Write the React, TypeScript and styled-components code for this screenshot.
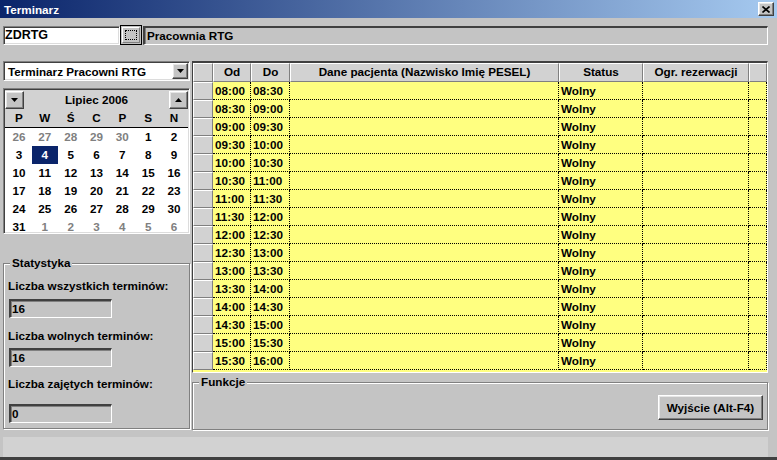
import React from 'react';
import styled, { createGlobalStyle, css } from 'styled-components';

const BG = '#c4c4c4';
const TEX = '#d2d2d2';
const YELLOW = '#ffff80';

const GlobalStyle = createGlobalStyle`
  html, body { margin: 0; padding: 0; background: ${BG}; }
  body {
    font-family: "Liberation Sans", Arial, sans-serif;
    font-size: 11.7px;
    font-weight: bold;
    color: #000;
  }
  * { box-sizing: border-box; }
`;

const sunken = css`
  border-style: solid;
  border-width: 1px;
  border-color: #808080 #ffffff #ffffff #808080;
  box-shadow: inset 1px 1px 0 #404040, inset -1px -1px 0 #dcdcdc;
`;

const raised = css`
  border-style: solid;
  border-width: 1px;
  border-color: #ffffff #404040 #404040 #ffffff;
  box-shadow: inset -1px -1px 0 #808080, inset 1px 1px 0 #e6e6e6;
`;

const etched = css`
  border: 1px solid #808080;
  box-shadow: inset 1px 1px 0 #ffffff, 1px 1px 0 #ffffff;
`;

const Window = styled.div`
  width: 777px;
  height: 460px;
  display: flex;
  flex-direction: column;
  background: ${BG};
  overflow: hidden;
  border-bottom: 3px solid #404040;
`;

const TitleBar = styled.div`
  height: 18px;
  flex: none;
  display: flex;
  align-items: center;
  justify-content: space-between;
  padding: 0 3px 0 4px;
  background: linear-gradient(to right, #0a246a 0%, #a6caf0 100%);
  color: #fff;
`;

const CloseButton = styled.div`
  width: 16px;
  height: 14px;
  ${raised};
  background: ${BG};
  display: flex;
  align-items: center;
  justify-content: center;
`;

const Body = styled.div`
  flex: 1;
  display: flex;
  flex-direction: column;
  padding: 7px 9px 0 3px;
`;

const TopRow = styled.div`
  height: 20px;
  display: flex;
  align-items: center;
`;

const CodeField = styled.div`
  width: 117px;
  height: 19px;
  ${sunken};
  background: #fff;
  padding-left: 1px;
  line-height: 17px;
  font-size: 12.5px;
`;

const BrowseButton = styled.div`
  width: 22px;
  height: 20px;
  border: 1px solid #000;
  background: ${BG};
  display: flex;
  padding: 1px;
`;

const BrowseInner = styled.div`
  flex: 1;
  border-style: solid;
  border-width: 1px;
  border-color: #fff #808080 #808080 #fff;
  display: flex;
  padding: 2px;
`;

const FocusRect = styled.div`
  flex: 1;
  border: 1px dotted #000;
`;

const NameField = styled.div`
  flex: 1;
  height: 19px;
  margin-left: 1px;
  background: ${BG};
  border-style: solid;
  border-width: 2px 1px 1px 2px;
  border-color: #404040 #ffffff #ffffff #404040;
  box-shadow: inset 1px 0 0 #808080;
  padding-left: 2px;
  line-height: 15px;
`;

const Main = styled.div`
  margin-top: 16px;
  height: 369px;
  display: flex;
  gap: 2px;
`;

const LeftColumn = styled.div`
  width: 187px;
  display: flex;
  flex-direction: column;
`;

const Combo = styled.div`
  height: 20px;
  ${sunken};
  background: #fff;
  display: flex;
  align-items: center;
  padding: 0 1px 0 4px;
`;

const ComboText = styled.div`
  flex: 1;
`;

const SmallButton = styled.div<{ $w: number; $h: number }>`
  width: ${(p) => p.$w}px;
  height: ${(p) => p.$h}px;
  ${raised};
  background: ${BG};
  display: flex;
  align-items: center;
  justify-content: center;
  flex: none;
`;

const Calendar = styled.div`
  margin-top: 7px;
  height: 146px;
  ${sunken};
  background: #fff;
  overflow: hidden;
  display: flex;
  flex-direction: column;
  padding: 1px;
`;

const CalHeader = styled.div`
  height: 19px;
  flex: none;
  background: ${TEX};
  display: flex;
  align-items: center;
`;

const MonthLabel = styled.div`
  flex: 1;
  text-align: center;
`;

const WeekRow = styled.div`
  height: 19px;
  flex: none;
  display: grid;
  grid-template-columns: repeat(7, 1fr);
  background: ${TEX};
  border-bottom: 1px solid #000;
  padding: 0 1px;
`;

const WeekDay = styled.div`
  text-align: center;
  line-height: 18px;
`;

const DaysGrid = styled.div`
  display: grid;
  grid-template-columns: repeat(7, 1fr);
  grid-auto-rows: 18px;
  padding: 0 1px;
`;

const Day = styled.div<{ $muted?: boolean; $selected?: boolean }>`
  text-align: center;
  line-height: 18px;
  color: ${(p) => (p.$selected ? '#fff' : p.$muted ? '#808080' : '#000')};
  background: ${(p) => (p.$selected ? '#0a246a' : 'transparent')};
`;

const GroupBox = styled.div<{ $top: number; $h: number }>`
  position: relative;
  margin-top: ${(p) => p.$top}px;
  height: ${(p) => p.$h}px;
  ${etched};
  display: flex;
  flex-direction: column;
`;

const Legend = styled.div`
  position: absolute;
  top: -8px;
  left: 6px;
  padding: 0 2px;
  background: ${BG};
  line-height: 14px;
`;

const StatLabel = styled.div<{ $gap: number }>`
  margin: ${(p) => p.$gap}px 0 0 4px;
  height: 14px;
  line-height: 14px;
`;

const StatField = styled.div<{ $gap: number }>`
  margin: ${(p) => p.$gap}px 0 0 5px;
  width: 103px;
  height: 19px;
  background: ${BG};
  border-style: solid;
  border-width: 2px 1px 1px 2px;
  border-color: #404040 #ffffff #ffffff #404040;
  box-shadow: inset 1px 1px 0 #808080;
  padding-left: 1px;
  line-height: 16px;
`;

const RightColumn = styled.div`
  flex: 1;
  display: flex;
  flex-direction: column;
`;

const Grid = styled.div`
  height: 312px;
  flex: none;
  background: ${YELLOW};
  border-style: solid;
  border-width: 2px 1px 1px 1px;
  border-color: #404040 #ffffff #ffffff #404040;
  overflow: hidden;
`;

const COLS = '20px 38px 39px 269px 84px 106px 1fr';

const GridRow = styled.div<{ $h: number }>`
  display: grid;
  grid-template-columns: ${COLS};
  height: ${(p) => p.$h}px;
`;

const HeaderCell = styled.div`
  background: ${TEX};
  border-style: solid;
  border-width: 1px;
  border-color: #ffffff #808080 #808080 #ffffff;
  text-align: center;
  line-height: 16px;
  white-space: nowrap;
  overflow: hidden;
`;

const IndicatorCell = styled.div`
  background: ${TEX};
  border-style: solid;
  border-width: 1px;
  border-color: #ffffff #808080 #808080 #ffffff;
`;

const DataCell = styled.div`
  background: ${YELLOW};
  border-right: 1px dotted #000;
  border-bottom: 1px dotted #000;
  padding-left: 2px;
  line-height: 17px;
  white-space: nowrap;
`;

const FunctionsBody = styled.div`
  flex: 1;
  display: flex;
  justify-content: flex-end;
  align-items: flex-start;
  padding: 12px 4px 0 0;
`;

const ExitButton = styled.div`
  width: 105px;
  height: 25px;
  ${raised};
  background: ${BG};
  display: flex;
  align-items: center;
  justify-content: center;
`;

const StatusBar = styled.div`
  margin-top: 7px;
  height: 20px;
  flex: none;
  background: ${TEX};
`;

const TriDown = () => (
  <svg width="7" height="4" viewBox="0 0 7 4">
    <path d="M0 0H7L3.5 4Z" fill="#000" />
  </svg>
);
const TriUp = () => (
  <svg width="7" height="4" viewBox="0 0 7 4">
    <path d="M0 4H7L3.5 0Z" fill="#000" />
  </svg>
);
const CloseX = () => (
  <svg width="8" height="7" viewBox="0 0 8 7">
    <path d="M0.5 0.5L7.5 6.5M7.5 0.5L0.5 6.5" stroke="#000" strokeWidth="1.6" />
  </svg>
);

const weekDays = ['P', 'W', 'Ś', 'C', 'P', 'S', 'N'];

type DayInfo = { n: number; muted?: boolean; selected?: boolean };
const days: DayInfo[] = [
  ...[26, 27, 28, 29, 30].map((n) => ({ n, muted: true })),
  ...Array.from({ length: 31 }, (_, i) => ({ n: i + 1, selected: i + 1 === 4 })),
  ...[1, 2, 3, 4, 5, 6].map((n) => ({ n, muted: true })),
];

const pad = (n: number) => String(n).padStart(2, '0');
const slots = Array.from({ length: 16 }, (_, i) => {
  const s = 8 * 60 + i * 30;
  const e = s + 30;
  return {
    od: `${pad(Math.floor(s / 60))}:${pad(s % 60)}`,
    do: `${pad(Math.floor(e / 60))}:${pad(e % 60)}`,
  };
});

export default function App() {
  return (
    <>
      <GlobalStyle />
      <Window>
        <TitleBar>
          <span>Terminarz</span>
          <CloseButton>
            <CloseX />
          </CloseButton>
        </TitleBar>
        <Body>
          <TopRow>
            <CodeField>ZDRTG</CodeField>
            <BrowseButton>
              <BrowseInner>
                <FocusRect />
              </BrowseInner>
            </BrowseButton>
            <NameField>Pracownia RTG</NameField>
          </TopRow>
          <Main>
            <LeftColumn>
              <Combo>
                <ComboText>Terminarz Pracowni RTG</ComboText>
                <SmallButton $w={16} $h={16}>
                  <TriDown />
                </SmallButton>
              </Combo>
              <Calendar>
                <CalHeader>
                  <SmallButton $w={19} $h={18}>
                    <TriDown />
                  </SmallButton>
                  <MonthLabel>Lipiec 2006</MonthLabel>
                  <SmallButton $w={19} $h={18}>
                    <TriUp />
                  </SmallButton>
                </CalHeader>
                <WeekRow>
                  {weekDays.map((d, i) => (
                    <WeekDay key={i}>{d}</WeekDay>
                  ))}
                </WeekRow>
                <DaysGrid>
                  {days.map((d, i) => (
                    <Day key={i} $muted={d.muted} $selected={d.selected}>
                      {d.n}
                    </Day>
                  ))}
                </DaysGrid>
              </Calendar>
              <GroupBox $top={29} $h={166}>
                <Legend>Statystyka</Legend>
                <StatLabel $gap={15}>Liczba wszystkich terminów:</StatLabel>
                <StatField $gap={6}>16</StatField>
                <StatLabel $gap={11}>Liczba wolnych terminów:</StatLabel>
                <StatField $gap={5}>16</StatField>
                <StatLabel $gap={10}>Liczba zajętych terminów:</StatLabel>
                <StatField $gap={13}>0</StatField>
              </GroupBox>
            </LeftColumn>
            <RightColumn>
              <Grid>
                <GridRow $h={19}>
                  <HeaderCell />
                  <HeaderCell>Od</HeaderCell>
                  <HeaderCell>Do</HeaderCell>
                  <HeaderCell>Dane pacjenta (Nazwisko Imię PESEL)</HeaderCell>
                  <HeaderCell>Status</HeaderCell>
                  <HeaderCell>Ogr. rezerwacji</HeaderCell>
                  <HeaderCell />
                </GridRow>
                {slots.map((s) => (
                  <GridRow key={s.od} $h={18}>
                    <IndicatorCell />
                    <DataCell>{s.od}</DataCell>
                    <DataCell>{s.do}</DataCell>
                    <DataCell />
                    <DataCell>Wolny</DataCell>
                    <DataCell />
                    <DataCell />
                  </GridRow>
                ))}
              </Grid>
              <GroupBox $top={9} $h={49}>
                <Legend>Funkcje</Legend>
                <FunctionsBody>
                  <ExitButton>Wyjście (Alt-F4)</ExitButton>
                </FunctionsBody>
              </GroupBox>
            </RightColumn>
          </Main>
          <StatusBar />
        </Body>
      </Window>
    </>
  );
}
